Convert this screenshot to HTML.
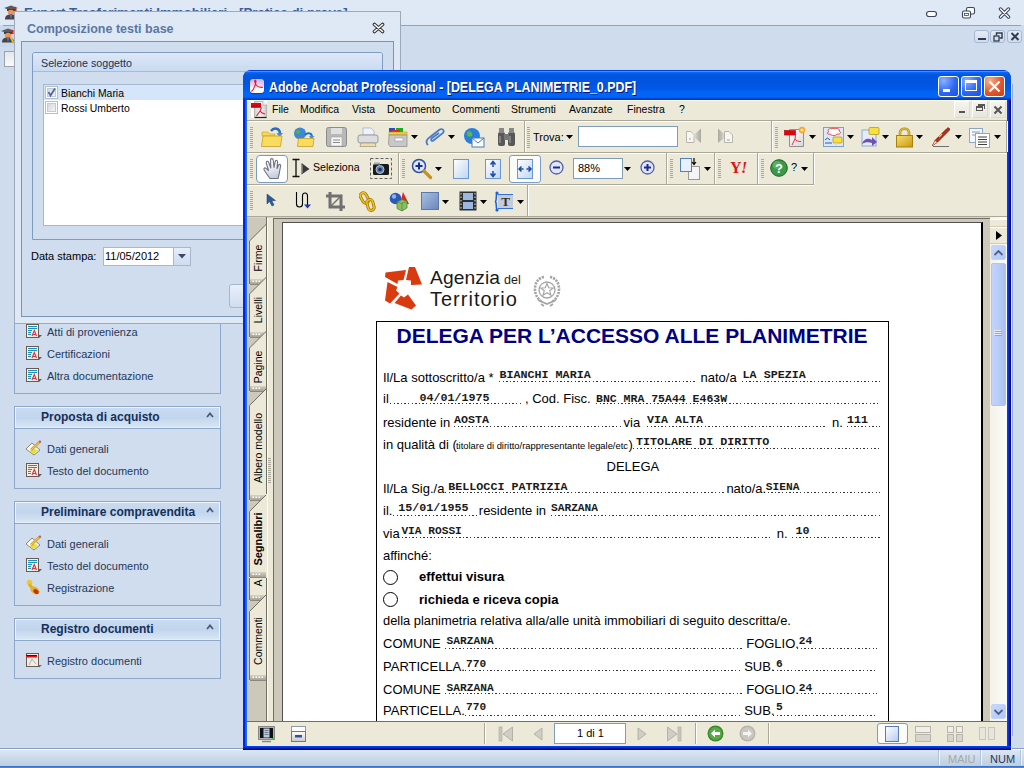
<!DOCTYPE html>
<html><head><meta charset="utf-8">
<style>
*{margin:0;padding:0;box-sizing:border-box}
html,body{width:1024px;height:768px;overflow:hidden;background:#cfdcee;font-family:"Liberation Sans",sans-serif;font-size:11px;color:#000}
.a{position:absolute}
#apptitle{left:0;top:0;width:1024px;height:26px;background:#dfe9f5;border-bottom:1px solid #8ea6c6}
#apptitle .t{position:absolute;left:24px;top:4px;font-weight:bold;font-size:14px;color:#3b5f9a;white-space:nowrap}
#statusbar{left:0;top:750px;width:1024px;height:18px;background:linear-gradient(#dde7f4,#c8d7eb)}
/* dialog */
#dlg{left:14px;top:11px;width:387px;height:313px;background:#dfe9f5;border:1px solid #9eaab8;border-right-color:#a3adb9}
#dlg .title{position:absolute;left:12px;top:9px;font-weight:bold;font-size:13px;color:#5b77a3;white-space:nowrap}
#frame{position:absolute;left:6px;top:29px;width:373px;height:276px;background:#d0ddee;border:1px solid #7894b8}
#grp{position:absolute;left:10px;top:10px;width:351px;height:188px;border:1px solid #7f9cc0;border-radius:2px}
#grp .hd{position:absolute;left:0;top:0;width:349px;height:19px;background:linear-gradient(#dde8f6,#c9daf0);border-bottom:1px solid #9fb6d4;color:#15305b;padding:3px 0 0 8px;font-size:11px}
#list{position:absolute;left:10px;top:31px;width:320px;height:142px;background:#fff;border:1px solid #a5b8d0}
.row{position:absolute;left:0;width:318px;height:15px;font-size:11px;color:#000;padding:1px 0 0 17px}
.cb{position:absolute;left:1px;top:1px;width:13px;height:13px;border:1px solid #a6b4c8;background:linear-gradient(135deg,#dfe4ea,#f6f7f9)}
/* left nav panels */
.panel{position:absolute;left:14px;width:207px;border:1px solid #98afcf;background:#d0ddee}
.phead{position:absolute;left:0;top:0;width:205px;height:23px;background:linear-gradient(#e6eef9,#c5d6ec);border-bottom:1px solid #98afcf;font-weight:bold;font-size:12px;color:#15305b;padding:4px 0 0 26px}
.phead .car{position:absolute;left:191px;top:7px;width:7px;height:5px}
.item{position:absolute;left:32px;font-size:11px;color:#1e395b;white-space:nowrap}
.ico{position:absolute;left:11px;width:16px;height:16px}
/* acrobat */

#acro{left:243px;top:70px;width:768px;height:680px;border-radius:8px 8px 0 0;background:linear-gradient(90deg,#2a44e6 0,#0000d0 1px,#0848e0 2px,#1a6ef8 3px,#1a6ef8 4px,#0a50e8 4px) ;overflow:hidden}
#atitle{position:absolute;left:0;top:0;width:768px;height:30px;border-radius:8px 8px 0 0;background:linear-gradient(#0041dd 0,#0041dd 1px,#3d95ff 1px,#3d95ff 2px,#0c6cf6 2px,#0a62ee 3px,#0256de 5px,#0054e0 12px,#005ae8 19px,#0064f4 22px,#0066f8 27px,#0052e6 28px,#003bc8 29px,#003bc8 30px)}
#atitletext_unused{position:absolute;left:26px;top:8px;font-weight:bold;font-size:13px;color:#fff;white-space:nowrap;text-shadow:1px 1px 0 #0a1a80}
.xpbtn{position:absolute;width:21px;height:21px;border:1px solid #fff;border-radius:3px;background:radial-gradient(circle at 30% 25%,#6e9cff,#2a62f0 60%,#1a4ad8)}
.xpbtn.close{background:radial-gradient(circle at 30% 25%,#f0a080,#e05030 60%,#c83818)}
#amain{position:absolute;left:4px;top:30px;width:760px;height:645px;background:#ece9d8}
#menubar{position:absolute;left:0;top:0;width:760px;height:20px;background:#ece9d8;border-top:1px solid #fffbf0;border-bottom:1px solid #fff}
#menubar span{position:absolute;top:3px;font-size:11px;color:#000;white-space:nowrap}
#tbarea{position:absolute;left:0;top:20px;width:760px;height:97px;background:#ece9d8}
#tabs{position:absolute;left:0;top:117px;width:20px;height:505px;background:#d4d0c8}
#docview{position:absolute;left:26px;top:117px;width:717px;height:505px;background:#d4d0c8;border-left:1px solid #716f64;border-top:1px solid #716f64;overflow:hidden}
#page{position:absolute;left:8px;top:4px;width:700px;height:600px;background:#fff;border:1px solid #000;border-right:2px solid #000}
#vscroll{position:absolute;left:743px;top:117px;width:17px;height:505px;background:linear-gradient(90deg,#f3f1e8,#fdfdf8)}
#astatus{position:absolute;left:0;top:622px;width:760px;height:23px;background:#ece9d8;border-top:1px solid #fff}

</style></head><body>
<div class="a" style="left:0px;top:0px;width:1024px;height:25px;background:#dfe9f5"></div>
<div class="a" style="left:3px;top:25px;width:1018px;height:1px;background:#8aa4c8"></div>
<div class="a" style="left:24px;top:5px;white-space:nowrap;font:bold 13.3px/16px 'Liberation Sans';color:#3a5e9c">Expert Trasferimenti Immobiliari - [Pratica di prova]</div>
<svg class="a" style="left:924px;top:10px" width="14" height="8" viewBox="0 0 14 8"><rect x="2.5" y="1.5" width="10" height="5" rx="2.5" fill="#fff" stroke="#3a4658" stroke-width="1.2"/></svg>
<svg class="a" style="left:961px;top:6px" width="15" height="13" viewBox="0 0 15 13"><rect x="5.5" y="1.5" width="8" height="6.5" rx="1.5" fill="#fff" stroke="#3a4658" stroke-width="1.1"/><rect x="1.5" y="5" width="8" height="7" rx="1.5" fill="#fff" stroke="#3a4658" stroke-width="1.1"/><rect x="3.5" y="7.5" width="4" height="2" fill="none" stroke="#3a4658" stroke-width=".8"/></svg>
<svg class="a" style="left:998px;top:7px" width="13" height="12" viewBox="0 0 13 12"><path d="M2.5 2 L10.5 10 M10.5 2 L2.5 10" stroke="#3a4658" stroke-width="3.4" stroke-linecap="round"/><path d="M2.5 2 L10.5 10 M10.5 2 L2.5 10" stroke="#fff" stroke-width="1.4" stroke-linecap="round"/></svg>
<div class="a" style="left:974px;top:30px;width:15px;height:13px;border:1px solid #a6b8d2;border-radius:3px;background:linear-gradient(#e4ecf6,#cfdcee)"></div>
<div class="a" style="left:990px;top:30px;width:15px;height:13px;border:1px solid #a6b8d2;border-radius:3px;background:linear-gradient(#e4ecf6,#cfdcee)"></div>
<div class="a" style="left:1007px;top:30px;width:15px;height:13px;border:1px solid #a6b8d2;border-radius:3px;background:linear-gradient(#e4ecf6,#cfdcee)"></div>
<div class="a" style="left:978px;top:38px;width:8px;height:2px;background:#333c4c"></div>
<svg class="a" style="left:993px;top:32px" width="10" height="10" viewBox="0 0 10 10"><rect x="1" y="4" width="5" height="5" fill="none" stroke="#333c4c" stroke-width="1.3"/><path d="M3.5 3.5 V1 H9 V6 H6.5" fill="none" stroke="#333c4c" stroke-width="1.5"/></svg>
<svg class="a" style="left:1010px;top:32px" width="10" height="9" viewBox="0 0 10 9"><path d="M1.5 1 L8.5 8 M8.5 1 L1.5 8" stroke="#333c4c" stroke-width="2"/></svg>
<svg class="a" style="left:3px;top:4px" width="16" height="16" viewBox="0 0 16 16"><path d="M1 4 L8 1.5 L15 4 L8 6.5Z" fill="#5a5a5a"/><path d="M4 5 H12 V7 H4Z" fill="#3a3a3a"/><path d="M12 3 L13 7" stroke="#e02010" stroke-width="1.6"/><ellipse cx="8" cy="8.5" rx="3.2" ry="2.8" fill="#f49050"/><path d="M2 15.5 C2 11 5 10.5 8 10.5 C11 10.5 14 11 14 15.5Z" fill="#454545"/><path d="M6.5 10.5 L8 15.5 L9.5 10.5" fill="#6a68b0"/></svg>
<div class="a" style="left:0px;top:26px;width:14px;height:21px;background:#c9d8ec"></div>
<svg class="a" style="left:0px;top:27px" width="16" height="16" viewBox="0 0 16 16"><path d="M1 4 L8 1.5 L15 4 L8 6.5Z" fill="#5a5a5a"/><path d="M4 5 H12 V7 H4Z" fill="#3a3a3a"/><path d="M12 3 L13 7" stroke="#e02010" stroke-width="1.6"/><ellipse cx="8" cy="8.5" rx="3.2" ry="2.8" fill="#f49050"/><path d="M2 15.5 C2 11 5 10.5 8 10.5 C11 10.5 14 11 14 15.5Z" fill="#454545"/><path d="M6.5 10.5 L8 15.5 L9.5 10.5" fill="#6a68b0"/></svg>
<svg class="a" style="left:10px;top:36px" width="5" height="8" viewBox="0 0 5 8"><path d="M1 0 L4 6 L3 8 L0 2Z" fill="#e8c030"/></svg>
<div class="a" style="left:4px;top:51px;width:11px;height:16px;background:linear-gradient(#e4e6ea,#fafafa);border:1px solid #9aa2ae"></div>
<div class="a" style="left:0px;top:748px;width:1024px;height:1px;background:#8aa0bc"></div>
<div class="a" style="left:0px;top:749px;width:1024px;height:1px;background:#f4f8fc"></div>
<div class="a" style="left:0px;top:750px;width:1024px;height:16px;background:linear-gradient(#dae6f4,#bccee2)"></div>
<div class="a" style="left:0px;top:766px;width:1024px;height:1px;background:#3a72c8"></div>
<div class="a" style="left:0px;top:767px;width:1024px;height:1px;background:#3a8ae6"></div>
<div class="a" style="left:938px;top:750px;width:1px;height:15px;background:#b4c2d6"></div>
<div class="a" style="left:939px;top:750px;width:1px;height:15px;background:#f2f6fb"></div>
<div class="a" style="left:980px;top:750px;width:1px;height:15px;background:#b4c2d6"></div>
<div class="a" style="left:981px;top:750px;width:1px;height:15px;background:#f2f6fb"></div>
<div class="a" style="left:1020px;top:750px;width:1px;height:15px;background:#b4c2d6"></div>
<div class="a" style="left:1021px;top:750px;width:1px;height:15px;background:#f2f6fb"></div>
<div class="a" style="left:948px;top:753px;white-space:nowrap;font:11px/12px 'Liberation Sans';color:#aaa89c">MAIU</div>
<div class="a" style="left:990px;top:753px;white-space:nowrap;font:11px/12px 'Liberation Sans';color:#1e395b">NUM</div>
<div class="a" style="left:14px;top:318px;width:207px;height:76px;border:1px solid #8ea8cc;background:#d0ddee"></div>
<svg class="a" style="left:26px;top:324px" width="16" height="15" viewBox="0 0 16 15"><path d="M13 11 L16 11 L13 14Z" fill="#5a5a5a"/><rect x="0.5" y="0.5" width="12" height="13" fill="#f6f0e2" stroke="#6a5a50"/><path d="M2 2.5 H11 M2 4.5 H11 M2 6.5 H6 M2 8.5 H5 M2 10.5 H5" stroke="#1a90c0" stroke-width="1"/><path d="M6 12 L8.3 6.5 L10.5 12 M7 10.5 H10" fill="none" stroke="#e03048" stroke-width="1.1"/></svg>
<div class="a" style="left:47px;top:326px;white-space:nowrap;font:11px/13px 'Liberation Sans';color:#1e395b">Atti di provenienza</div>
<svg class="a" style="left:26px;top:346px" width="16" height="15" viewBox="0 0 16 15"><path d="M13 11 L16 11 L13 14Z" fill="#5a5a5a"/><rect x="0.5" y="0.5" width="12" height="13" fill="#f6f0e2" stroke="#6a5a50"/><path d="M2 2.5 H11 M2 4.5 H11 M2 6.5 H6 M2 8.5 H5 M2 10.5 H5" stroke="#1a90c0" stroke-width="1"/><path d="M6 12 L8.3 6.5 L10.5 12 M7 10.5 H10" fill="none" stroke="#e03048" stroke-width="1.1"/></svg>
<div class="a" style="left:47px;top:348px;white-space:nowrap;font:11px/13px 'Liberation Sans';color:#1e395b">Certificazioni</div>
<svg class="a" style="left:26px;top:368px" width="16" height="15" viewBox="0 0 16 15"><path d="M13 11 L16 11 L13 14Z" fill="#5a5a5a"/><rect x="0.5" y="0.5" width="12" height="13" fill="#f6f0e2" stroke="#6a5a50"/><path d="M2 2.5 H11 M2 4.5 H11 M2 6.5 H6 M2 8.5 H5 M2 10.5 H5" stroke="#1a90c0" stroke-width="1"/><path d="M6 12 L8.3 6.5 L10.5 12 M7 10.5 H10" fill="none" stroke="#e03048" stroke-width="1.1"/></svg>
<div class="a" style="left:47px;top:370px;white-space:nowrap;font:11px/13px 'Liberation Sans';color:#1e395b">Altra documentazione</div>
<div class="a" style="left:14px;top:406px;width:207px;height:83px;border:1px solid #8ea8cc;background:#d0ddee"></div>
<div class="a" style="left:15px;top:407px;width:205px;height:21px;background:linear-gradient(#c9dbf0,#c1d5ec 50%,#d8e6f5);border:1px solid #f0f5fb;border-bottom-color:#e4edf8"></div>
<div class="a" style="left:15px;top:428px;width:205px;height:1px;background:#8ea8cc"></div>
<div class="a" style="left:41px;top:410px;white-space:nowrap;font:bold 12px/14px 'Liberation Sans';color:#15305b">Proposta di acquisto</div>
<svg class="a" style="left:206px;top:412px" width="8" height="6" viewBox="0 0 8 6"><path d="M1 5 L4 1.5 L7 5" fill="none" stroke="#4a5a7a" stroke-width="1.8"/></svg>
<svg class="a" style="left:25px;top:440px" width="17" height="16" viewBox="0 0 17 16"><path d="M1 9 L7 3 L15 10 L9 15Z" fill="#f8f8f0" stroke="#606040" stroke-width=".7"/><path d="M4 11 L9 14 L13 10 L9 9Z" fill="#e8e030"/><path d="M6 10 L15 1.5" stroke="#d0a030" stroke-width="2.5"/><path d="M6 10 L15 1.5" stroke="#f0d070" stroke-width="1"/><circle cx="15" cy="1.8" r="1.2" fill="#c06080"/></svg>
<div class="a" style="left:47px;top:443px;white-space:nowrap;font:11px/13px 'Liberation Sans';color:#1e395b">Dati generali</div>
<svg class="a" style="left:26px;top:463px" width="16" height="15" viewBox="0 0 16 15"><path d="M13 11 L16 11 L13 14Z" fill="#5a5a5a"/><rect x="0.5" y="0.5" width="12" height="13" fill="#f6f0e2" stroke="#6a5a50"/><path d="M2 2.5 H11 M2 4.5 H11 M2 6.5 H6 M2 8.5 H5 M2 10.5 H5" stroke="#1a90c0" stroke-width="1"/><path d="M6 12 L8.3 6.5 L10.5 12 M7 10.5 H10" fill="none" stroke="#e03048" stroke-width="1.1"/></svg>
<div class="a" style="left:47px;top:465px;white-space:nowrap;font:11px/13px 'Liberation Sans';color:#1e395b">Testo del documento</div>
<div class="a" style="left:14px;top:501px;width:207px;height:105px;border:1px solid #8ea8cc;background:#d0ddee"></div>
<div class="a" style="left:15px;top:502px;width:205px;height:21px;background:linear-gradient(#c9dbf0,#c1d5ec 50%,#d8e6f5);border:1px solid #f0f5fb;border-bottom-color:#e4edf8"></div>
<div class="a" style="left:15px;top:523px;width:205px;height:1px;background:#8ea8cc"></div>
<div class="a" style="left:41px;top:505px;white-space:nowrap;font:bold 12px/14px 'Liberation Sans';color:#15305b">Preliminare compravendita</div>
<svg class="a" style="left:206px;top:507px" width="8" height="6" viewBox="0 0 8 6"><path d="M1 5 L4 1.5 L7 5" fill="none" stroke="#4a5a7a" stroke-width="1.8"/></svg>
<svg class="a" style="left:25px;top:535px" width="17" height="16" viewBox="0 0 17 16"><path d="M1 9 L7 3 L15 10 L9 15Z" fill="#f8f8f0" stroke="#606040" stroke-width=".7"/><path d="M4 11 L9 14 L13 10 L9 9Z" fill="#e8e030"/><path d="M6 10 L15 1.5" stroke="#d0a030" stroke-width="2.5"/><path d="M6 10 L15 1.5" stroke="#f0d070" stroke-width="1"/><circle cx="15" cy="1.8" r="1.2" fill="#c06080"/></svg>
<div class="a" style="left:47px;top:538px;white-space:nowrap;font:11px/13px 'Liberation Sans';color:#1e395b">Dati generali</div>
<svg class="a" style="left:26px;top:558px" width="16" height="15" viewBox="0 0 16 15"><path d="M13 11 L16 11 L13 14Z" fill="#5a5a5a"/><rect x="0.5" y="0.5" width="12" height="13" fill="#f6f0e2" stroke="#6a5a50"/><path d="M2 2.5 H11 M2 4.5 H11 M2 6.5 H6 M2 8.5 H5 M2 10.5 H5" stroke="#1a90c0" stroke-width="1"/><path d="M6 12 L8.3 6.5 L10.5 12 M7 10.5 H10" fill="none" stroke="#e03048" stroke-width="1.1"/></svg>
<div class="a" style="left:47px;top:560px;white-space:nowrap;font:11px/13px 'Liberation Sans';color:#1e395b">Testo del documento</div>
<svg class="a" style="left:25px;top:579px" width="16" height="16" viewBox="0 0 16 16"><circle cx="4.5" cy="3.5" r="2.8" fill="#f0c830"/><path d="M4 5 L8 10" stroke="#e0b020" stroke-width="3"/><ellipse cx="10" cy="11.5" rx="5" ry="3.5" transform="rotate(35 10 11.5)" fill="#e8b020"/><ellipse cx="11" cy="12.5" rx="3" ry="2" transform="rotate(35 11 12.5)" fill="#c03020"/></svg>
<div class="a" style="left:47px;top:582px;white-space:nowrap;font:11px/13px 'Liberation Sans';color:#1e395b">Registrazione</div>
<div class="a" style="left:14px;top:618px;width:207px;height:61px;border:1px solid #8ea8cc;background:#d0ddee"></div>
<div class="a" style="left:15px;top:619px;width:205px;height:21px;background:linear-gradient(#c9dbf0,#c1d5ec 50%,#d8e6f5);border:1px solid #f0f5fb;border-bottom-color:#e4edf8"></div>
<div class="a" style="left:15px;top:640px;width:205px;height:1px;background:#8ea8cc"></div>
<div class="a" style="left:41px;top:622px;white-space:nowrap;font:bold 12px/14px 'Liberation Sans';color:#15305b">Registro documenti</div>
<svg class="a" style="left:206px;top:624px" width="8" height="6" viewBox="0 0 8 6"><path d="M1 5 L4 1.5 L7 5" fill="none" stroke="#4a5a7a" stroke-width="1.8"/></svg>
<svg class="a" style="left:26px;top:653px" width="16" height="15" viewBox="0 0 16 15"><path d="M13 12 L16 12 L13 14.5Z" fill="#6a6a6a"/><rect x="0.5" y="0.5" width="12" height="13" fill="#f0ece4" stroke="#6a5a50"/><rect x="0" y="2" width="11" height="2.5" fill="#e01010"/><rect x="0" y="2" width="11" height=".8" fill="#201010"/><path d="M3 12 L6 6 L10 11" fill="none" stroke="#b8b0a8" stroke-width="1"/></svg>
<div class="a" style="left:47px;top:655px;white-space:nowrap;font:11px/13px 'Liberation Sans';color:#1e395b">Registro documenti</div>
<div class="a" style="left:14px;top:11px;width:387px;height:313px;background:#dfe9f5;border:1px solid #9eaab8"></div>
<div class="a" style="left:27px;top:21.5px;white-space:nowrap;font:bold 12.5px/15px 'Liberation Sans';color:#5b77a3">Composizione testi base</div>
<svg class="a" style="left:372px;top:22px" width="13" height="12" viewBox="0 0 13 12"><path d="M2.5 2.5 L10.5 9.5 M10.5 2.5 L2.5 9.5" stroke="#303030" stroke-width="3.6" stroke-linecap="round"/><path d="M2.5 2.5 L10.5 9.5 M10.5 2.5 L2.5 9.5" stroke="#fff" stroke-width="1.6" stroke-linecap="round"/></svg>
<div class="a" style="left:21px;top:41px;width:373px;height:276px;background:#d0ddee;border:1px solid #7894b8"></div>
<div class="a" style="left:32px;top:52px;width:351px;height:188px;border:1px solid #7f9cc0;border-radius:3px 3px 0 0"></div>
<div class="a" style="left:33px;top:53px;width:349px;height:19px;background:linear-gradient(#dde8f7,#c9daf0);border-bottom:1px solid #a8bcd8;border-radius:2px 2px 0 0"></div>
<div class="a" style="left:41px;top:57px;white-space:nowrap;font:10.7px/13px 'Liberation Sans';color:#15305b">Selezione soggetto</div>
<div class="a" style="left:43px;top:84px;width:320px;height:142px;background:#fff;border:1px solid #a5b8d0"></div>
<div class="a" style="left:44px;top:85px;width:318px;height:15px;background:#d5e5fa"></div>
<div class="a" style="left:45px;top:86px;width:13px;height:13px;border:1px solid #aec0d8;background:#fff"><div style='position:absolute;left:1px;top:1px;width:9px;height:9px;border:1px solid #c4cad2;background:linear-gradient(135deg,#d4d8de,#f2f4f6)'></div></div>
<svg class="a" style="left:46px;top:87px" width="11" height="11" viewBox="0 0 11 11"><path d="M2.5 5 L4.5 8.5 L9 1.5" fill="none" stroke="#4a68a8" stroke-width="1.7"/></svg>
<div class="a" style="left:45px;top:101px;width:13px;height:13px;border:1px solid #aec0d8;background:#fff"><div style='position:absolute;left:1px;top:1px;width:9px;height:9px;border:1px solid #c4cad2;background:linear-gradient(135deg,#d4d8de,#f2f4f6)'></div></div>
<div class="a" style="left:61px;top:87px;white-space:nowrap;font:10.4px/13px 'Liberation Sans';color:#000">Bianchi Maria</div>
<div class="a" style="left:61px;top:102px;white-space:nowrap;font:10.4px/13px 'Liberation Sans';color:#000">Rossi Umberto</div>
<div class="a" style="left:31px;top:250px;white-space:nowrap;font:11px/13px 'Liberation Sans';color:#000">Data stampa:</div>
<div class="a" style="left:103px;top:247px;width:88px;height:19px;background:#fff;border:1px solid #a5b8d0"></div>
<div class="a" style="left:105px;top:250px;white-space:nowrap;font:11px/13px 'Liberation Sans';color:#000">11/05/2012</div>
<div class="a" style="left:173px;top:247px;width:18px;height:19px;background:linear-gradient(#e6eef9,#cddcef);border:1px solid #a5b8d0"></div>
<svg class="a" style="left:178px;top:254px" width="8" height="5" viewBox="0 0 8 5"><path d="M0 0 H8 L4 4.5Z" fill="#3a4a6a"/></svg>
<div class="a" style="left:229px;top:284px;width:40px;height:24px;background:linear-gradient(#e8f0fa,#d0ddef);border:1px solid #a5b8d0;border-radius:3px"></div><div id="acro" class="a"><div id="atitle"></div><div id="amain"></div></div>
<div class="a" style="left:247px;top:218px;width:20px;height:503px;background:#cdc9ba"></div>
<div class="a" style="left:267px;top:218px;width:6px;height:503px;background:#ece9d8;border-left:1px solid #fbfaf4"></div>
<div class="a" style="left:273px;top:218px;width:717px;height:503px;background:#cdc9ba;border-left:1px solid #716f64;border-top:1px solid #716f64;overflow:hidden"><div style="position:absolute;left:8px;top:3px;width:701px;height:600px;background:#fff;border:1px solid #505050;border-right:2px solid #000"></div></div>
<div class="a" style="left:247px;top:217px;width:760px;height:1px;background:#d8d4c4"></div>
<div class="a" style="left:990px;top:217px;width:17px;height:505px;background:linear-gradient(90deg,#f3f1e8,#fdfdf8)"></div>
<div class="a" style="left:1007px;top:100px;width:1px;height:650px;background:#0040f0"></div>
<div class="a" style="left:1008px;top:100px;width:1px;height:650px;background:#0030d8"></div>
<div class="a" style="left:1009px;top:100px;width:1px;height:650px;background:#0018b0"></div>
<div class="a" style="left:1010px;top:100px;width:1px;height:650px;background:#000890"></div>
<div class="a" style="left:243px;top:746px;width:768px;height:1px;background:#0040f0"></div>
<div class="a" style="left:243px;top:747px;width:768px;height:1px;background:#0030d0"></div>
<div class="a" style="left:243px;top:748px;width:768px;height:1px;background:#0018a0"></div>
<div class="a" style="left:243px;top:749px;width:768px;height:1px;background:#000880"></div>
<div class="a" style="left:1011px;top:84px;width:1px;height:665px;background:#dce6f2"></div>
<div class="a" style="left:1012px;top:84px;width:1px;height:652px;background:#98acc8"></div>
<div class="a" style="left:250px;top:79px;width:14px;height:14px;background:linear-gradient(#d0b0e8,#ecdcf4 50%,#fff 70%,#f8f4f0);border-radius:3px;box-shadow:0 1px 1px #1a3a90"></div>
<svg class="a" style="left:250px;top:79px" width="14" height="14" viewBox="0 0 14 14"><path d="M1.5 12.5 C3.5 10.5 5 7 5.8 3.5 C6.1 1.8 5.5 0.8 5 1.2 C4.4 1.8 5 4.5 6.5 6.5 C8 8.3 10.5 8.5 13 8.3" fill="none" stroke="#f01020" stroke-width="1.1"/></svg>
<div class="a" style="left:269px;top:79px;white-space:nowrap;font-weight:bold;font-size:14px;line-height:16px;color:#fff;transform:scaleX(0.888);transform-origin:0 0;text-shadow:1px 1px 0 #0a1878">Adobe Acrobat Professional - [DELEGA PLANIMETRIE_0.PDF]</div>
<div class="a" style="left:938px;top:76px;width:21px;height:21px;border:1px solid #fff;border-radius:3px;background:radial-gradient(circle at 25% 20%,#8ab0ff,#2e68f4 55%,#1c4ee0)"></div>
<div class="a" style="left:961px;top:76px;width:21px;height:21px;border:1px solid #fff;border-radius:3px;background:radial-gradient(circle at 25% 20%,#8ab0ff,#2e68f4 55%,#1c4ee0)"></div>
<div class="a" style="left:984px;top:76px;width:21px;height:21px;border:1px solid #fff;border-radius:3px;background:radial-gradient(circle at 25% 20%,#f6b090,#e2582e 55%,#c84018)"></div>
<div class="a" style="left:943px;top:89px;width:7px;height:3px;background:#fff"></div>
<div class="a" style="left:965px;top:80px;width:12px;height:11px;border:1px solid #fff;border-top-width:3px"></div>
<svg class="a" style="left:984px;top:76px" width="21" height="21" viewBox="0 0 21 21"><path d="M5.5 5.5 L15.5 15.5 M15.5 5.5 L5.5 15.5" stroke="#fff" stroke-width="2.2"/></svg>
<div class="a" style="left:247px;top:100px;width:760px;height:21px;background:#ece9d8;border-top:1px solid #fffaf0"></div>
<svg class="a" style="left:250px;top:101px" width="18" height="18" viewBox="0 0 18 18"><rect x="1" y="0" width="16" height="17" fill="#fff"/><defs><linearGradient id="gmi" x1="0" y1="0" x2="1" y2="0"><stop offset="0" stop-color="#d0d0d0"/><stop offset=".5" stop-color="#f4f4f4"/><stop offset="1" stop-color="#c8c8c8"/></linearGradient></defs><path d="M4.5 0.5 H13 L16.5 4 V16.5 H4.5Z" fill="url(#gmi)" stroke="#a8a8a8" stroke-width=".8"/><path d="M4.5 16.5 H16.5" stroke="#202020" stroke-width="1.2"/><path d="M13 0.5 V4 H16.5" fill="#fff" stroke="#999" stroke-width=".6"/><rect x="1" y="2" width="10" height="4.5" fill="#e80010"/><rect x="1" y="5.5" width="10" height="1" fill="#900008"/><path d="M6.5 15 L10 10 L11.5 6.5 M10 10 C11 12 13 12.5 15 13" fill="none" stroke="#e02030" stroke-width="1.1"/></svg>
<div class="a" style="left:272px;top:103px;white-space:nowrap;font-size:10.5px;color:#000">File</div>
<div class="a" style="left:300px;top:103px;white-space:nowrap;font-size:10.5px;color:#000">Modifica</div>
<div class="a" style="left:352px;top:103px;white-space:nowrap;font-size:10.5px;color:#000">Vista</div>
<div class="a" style="left:387px;top:103px;white-space:nowrap;font-size:10.5px;color:#000">Documento</div>
<div class="a" style="left:452px;top:103px;white-space:nowrap;font-size:10.5px;color:#000">Commenti</div>
<div class="a" style="left:511px;top:103px;white-space:nowrap;font-size:10.5px;color:#000">Strumenti</div>
<div class="a" style="left:569px;top:103px;white-space:nowrap;font-size:10.5px;color:#000">Avanzate</div>
<div class="a" style="left:627px;top:103px;white-space:nowrap;font-size:10.5px;color:#000">Finestra</div>
<div class="a" style="left:679px;top:103px;white-space:nowrap;font-size:10.5px;color:#000">?</div>
<div class="a" style="left:954px;top:101px;width:16px;height:17px;background:linear-gradient(#f4f3ee,#e8e6dc);border:1px solid #fff;border-right-color:#dedbd0;border-bottom-color:#dedbd0"></div>
<div class="a" style="left:972px;top:101px;width:16px;height:17px;background:linear-gradient(#f4f3ee,#e8e6dc);border:1px solid #fff;border-right-color:#dedbd0;border-bottom-color:#dedbd0"></div>
<div class="a" style="left:990px;top:101px;width:16px;height:17px;background:linear-gradient(#f4f3ee,#e8e6dc);border:1px solid #fff;border-right-color:#dedbd0;border-bottom-color:#dedbd0"></div>
<div class="a" style="left:959px;top:111px;width:6px;height:2px;background:#555"></div>
<div class="a" style="left:976px;top:106px;width:7px;height:5px;border:1px solid #555;border-top-width:2px"></div>
<div class="a" style="left:978px;top:104px;width:7px;height:5px;border:1px solid #555;border-top-width:2px;border-left:none;border-bottom:none"></div>
<svg class="a" style="left:990px;top:101px" width="16" height="17" viewBox="0 0 16 17"><path d="M4.5 5.5 L11.5 12.5 M11.5 5.5 L4.5 12.5" stroke="#555" stroke-width="2"/></svg>
<div class="a" style="left:247px;top:120px;width:760px;height:1px;background:#aca899"></div>
<div class="a" style="left:247px;top:121px;width:760px;height:1px;background:#fff"></div>
<div class="a" style="left:247px;top:152px;width:760px;height:1px;background:#aca899"></div>
<div class="a" style="left:247px;top:153px;width:760px;height:1px;background:#fff"></div>
<div class="a" style="left:247px;top:184px;width:567px;height:1px;background:#aca899"></div>
<div class="a" style="left:247px;top:185px;width:567px;height:1px;background:#fff"></div>
<div class="a" style="left:247px;top:216px;width:760px;height:1px;background:#aca899"></div>
<svg class="a" style="left:250px;top:127px" width="3" height="21" viewBox="0 0 3 21"><rect x="0" y="0" width="3" height="1" fill="#aaa89a"/><rect x="0" y="2" width="3" height="1" fill="#aaa89a"/><rect x="0" y="4" width="3" height="1" fill="#aaa89a"/><rect x="0" y="6" width="3" height="1" fill="#aaa89a"/><rect x="0" y="8" width="3" height="1" fill="#aaa89a"/><rect x="0" y="10" width="3" height="1" fill="#aaa89a"/><rect x="0" y="12" width="3" height="1" fill="#aaa89a"/><rect x="0" y="14" width="3" height="1" fill="#aaa89a"/><rect x="0" y="16" width="3" height="1" fill="#aaa89a"/><rect x="0" y="18" width="3" height="1" fill="#aaa89a"/><rect x="0" y="20" width="3" height="1" fill="#aaa89a"/></svg>
<div class="a" style="left:524px;top:121px;width:1px;height:31px;background:#aca899"></div>
<div class="a" style="left:525px;top:121px;width:1px;height:31px;background:#fff"></div>
<svg class="a" style="left:527px;top:127px" width="3" height="21" viewBox="0 0 3 21"><rect x="0" y="0" width="3" height="1" fill="#aaa89a"/><rect x="0" y="2" width="3" height="1" fill="#aaa89a"/><rect x="0" y="4" width="3" height="1" fill="#aaa89a"/><rect x="0" y="6" width="3" height="1" fill="#aaa89a"/><rect x="0" y="8" width="3" height="1" fill="#aaa89a"/><rect x="0" y="10" width="3" height="1" fill="#aaa89a"/><rect x="0" y="12" width="3" height="1" fill="#aaa89a"/><rect x="0" y="14" width="3" height="1" fill="#aaa89a"/><rect x="0" y="16" width="3" height="1" fill="#aaa89a"/><rect x="0" y="18" width="3" height="1" fill="#aaa89a"/><rect x="0" y="20" width="3" height="1" fill="#aaa89a"/></svg>
<div class="a" style="left:771px;top:121px;width:1px;height:31px;background:#aca899"></div>
<div class="a" style="left:772px;top:121px;width:1px;height:31px;background:#fff"></div>
<svg class="a" style="left:775px;top:127px" width="3" height="21" viewBox="0 0 3 21"><rect x="0" y="0" width="3" height="1" fill="#aaa89a"/><rect x="0" y="2" width="3" height="1" fill="#aaa89a"/><rect x="0" y="4" width="3" height="1" fill="#aaa89a"/><rect x="0" y="6" width="3" height="1" fill="#aaa89a"/><rect x="0" y="8" width="3" height="1" fill="#aaa89a"/><rect x="0" y="10" width="3" height="1" fill="#aaa89a"/><rect x="0" y="12" width="3" height="1" fill="#aaa89a"/><rect x="0" y="14" width="3" height="1" fill="#aaa89a"/><rect x="0" y="16" width="3" height="1" fill="#aaa89a"/><rect x="0" y="18" width="3" height="1" fill="#aaa89a"/><rect x="0" y="20" width="3" height="1" fill="#aaa89a"/></svg>
<div class="a" style="left:1006px;top:121px;width:1px;height:31px;background:#aca899"></div>
<div class="a" style="left:1007px;top:121px;width:1px;height:31px;background:#fff"></div>
<svg class="a" style="left:250px;top:159px" width="3" height="20" viewBox="0 0 3 20"><rect x="0" y="0" width="3" height="1" fill="#aaa89a"/><rect x="0" y="2" width="3" height="1" fill="#aaa89a"/><rect x="0" y="4" width="3" height="1" fill="#aaa89a"/><rect x="0" y="6" width="3" height="1" fill="#aaa89a"/><rect x="0" y="8" width="3" height="1" fill="#aaa89a"/><rect x="0" y="10" width="3" height="1" fill="#aaa89a"/><rect x="0" y="12" width="3" height="1" fill="#aaa89a"/><rect x="0" y="14" width="3" height="1" fill="#aaa89a"/><rect x="0" y="16" width="3" height="1" fill="#aaa89a"/><rect x="0" y="18" width="3" height="1" fill="#aaa89a"/></svg>
<div class="a" style="left:398px;top:153px;width:1px;height:31px;background:#aca899"></div>
<div class="a" style="left:399px;top:153px;width:1px;height:31px;background:#fff"></div>
<svg class="a" style="left:402px;top:159px" width="3" height="20" viewBox="0 0 3 20"><rect x="0" y="0" width="3" height="1" fill="#aaa89a"/><rect x="0" y="2" width="3" height="1" fill="#aaa89a"/><rect x="0" y="4" width="3" height="1" fill="#aaa89a"/><rect x="0" y="6" width="3" height="1" fill="#aaa89a"/><rect x="0" y="8" width="3" height="1" fill="#aaa89a"/><rect x="0" y="10" width="3" height="1" fill="#aaa89a"/><rect x="0" y="12" width="3" height="1" fill="#aaa89a"/><rect x="0" y="14" width="3" height="1" fill="#aaa89a"/><rect x="0" y="16" width="3" height="1" fill="#aaa89a"/><rect x="0" y="18" width="3" height="1" fill="#aaa89a"/></svg>
<div class="a" style="left:666px;top:153px;width:1px;height:31px;background:#aca899"></div>
<div class="a" style="left:667px;top:153px;width:1px;height:31px;background:#fff"></div>
<svg class="a" style="left:670px;top:159px" width="3" height="20" viewBox="0 0 3 20"><rect x="0" y="0" width="3" height="1" fill="#aaa89a"/><rect x="0" y="2" width="3" height="1" fill="#aaa89a"/><rect x="0" y="4" width="3" height="1" fill="#aaa89a"/><rect x="0" y="6" width="3" height="1" fill="#aaa89a"/><rect x="0" y="8" width="3" height="1" fill="#aaa89a"/><rect x="0" y="10" width="3" height="1" fill="#aaa89a"/><rect x="0" y="12" width="3" height="1" fill="#aaa89a"/><rect x="0" y="14" width="3" height="1" fill="#aaa89a"/><rect x="0" y="16" width="3" height="1" fill="#aaa89a"/><rect x="0" y="18" width="3" height="1" fill="#aaa89a"/></svg>
<div class="a" style="left:714px;top:153px;width:1px;height:31px;background:#aca899"></div>
<div class="a" style="left:715px;top:153px;width:1px;height:31px;background:#fff"></div>
<svg class="a" style="left:718px;top:159px" width="3" height="20" viewBox="0 0 3 20"><rect x="0" y="0" width="3" height="1" fill="#aaa89a"/><rect x="0" y="2" width="3" height="1" fill="#aaa89a"/><rect x="0" y="4" width="3" height="1" fill="#aaa89a"/><rect x="0" y="6" width="3" height="1" fill="#aaa89a"/><rect x="0" y="8" width="3" height="1" fill="#aaa89a"/><rect x="0" y="10" width="3" height="1" fill="#aaa89a"/><rect x="0" y="12" width="3" height="1" fill="#aaa89a"/><rect x="0" y="14" width="3" height="1" fill="#aaa89a"/><rect x="0" y="16" width="3" height="1" fill="#aaa89a"/><rect x="0" y="18" width="3" height="1" fill="#aaa89a"/></svg>
<div class="a" style="left:757px;top:153px;width:1px;height:31px;background:#aca899"></div>
<div class="a" style="left:758px;top:153px;width:1px;height:31px;background:#fff"></div>
<svg class="a" style="left:761px;top:159px" width="3" height="20" viewBox="0 0 3 20"><rect x="0" y="0" width="3" height="1" fill="#aaa89a"/><rect x="0" y="2" width="3" height="1" fill="#aaa89a"/><rect x="0" y="4" width="3" height="1" fill="#aaa89a"/><rect x="0" y="6" width="3" height="1" fill="#aaa89a"/><rect x="0" y="8" width="3" height="1" fill="#aaa89a"/><rect x="0" y="10" width="3" height="1" fill="#aaa89a"/><rect x="0" y="12" width="3" height="1" fill="#aaa89a"/><rect x="0" y="14" width="3" height="1" fill="#aaa89a"/><rect x="0" y="16" width="3" height="1" fill="#aaa89a"/><rect x="0" y="18" width="3" height="1" fill="#aaa89a"/></svg>
<div class="a" style="left:813px;top:153px;width:1px;height:31px;background:#aca899"></div>
<div class="a" style="left:814px;top:153px;width:1px;height:31px;background:#fff"></div>
<svg class="a" style="left:250px;top:191px" width="3" height="20" viewBox="0 0 3 20"><rect x="0" y="0" width="3" height="1" fill="#aaa89a"/><rect x="0" y="2" width="3" height="1" fill="#aaa89a"/><rect x="0" y="4" width="3" height="1" fill="#aaa89a"/><rect x="0" y="6" width="3" height="1" fill="#aaa89a"/><rect x="0" y="8" width="3" height="1" fill="#aaa89a"/><rect x="0" y="10" width="3" height="1" fill="#aaa89a"/><rect x="0" y="12" width="3" height="1" fill="#aaa89a"/><rect x="0" y="14" width="3" height="1" fill="#aaa89a"/><rect x="0" y="16" width="3" height="1" fill="#aaa89a"/><rect x="0" y="18" width="3" height="1" fill="#aaa89a"/></svg>
<div class="a" style="left:527px;top:185px;width:1px;height:31px;background:#aca899"></div>
<div class="a" style="left:528px;top:185px;width:1px;height:31px;background:#fff"></div>
<svg class="a" style="left:261px;top:127px" width="22" height="20" viewBox="0 0 22 20"><path d="M10 4 C13 0 19 1 19 7" fill="none" stroke="#2a6cc0" stroke-width="2.5"/><path d="M15.5 6 L22 6 L18.5 10.5Z" fill="#4a8ce0"/><path d="M1 5 L7 5 L8.5 7 L14 7 L14 9 L1 9Z" fill="#f4d860" stroke="#c8a020" stroke-width=".6"/><path d="M0.5 19.5 L2 9 L21 9 L19.5 19.5Z" fill="#f8dc60" stroke="#c8a020" stroke-width=".8"/></svg>
<svg class="a" style="left:293px;top:127px" width="22" height="20" viewBox="0 0 22 20"><circle cx="7" cy="6.5" r="6" fill="#3a88d8"/><path d="M3 4 C5 2 8 3 7 6 C5 8 3 7 3 4Z" fill="#5ab040"/><path d="M12 8 C15 5 19 6 19 10" fill="none" stroke="#2a6cc0" stroke-width="2"/><path d="M16 9 L21.5 9 L18.5 12.5Z" fill="#4a8ce0"/><path d="M4.5 19.5 L5.5 11.5 L21 11.5 L20 19.5Z" fill="#f8dc60" stroke="#c8a020" stroke-width=".8"/></svg>
<svg class="a" style="left:326px;top:127px" width="21" height="20" viewBox="0 0 21 20"><rect x="0.5" y="0.5" width="20" height="19" rx="2" fill="#b8b8b8" stroke="#8c8c8c"/><rect x="5" y="1" width="11" height="6" fill="#e0e0e0"/><rect x="5" y="10" width="11" height="9" fill="#f6f6f6" stroke="#999" stroke-width=".5"/><path d="M7 13 H14 M7 15.5 H14" stroke="#888"/></svg>
<svg class="a" style="left:357px;top:127px" width="22" height="20" viewBox="0 0 22 20"><path d="M6 1 L14 1 L17 4 L17 8 L6 8Z" fill="#eef4ff" stroke="#9ab" stroke-width=".7"/><rect x="1" y="8" width="20" height="8" rx="2" fill="#ddd" stroke="#999"/><path d="M4 16 L18 16 L19 19.5 L3 19.5Z" fill="#f0e0a0" stroke="#888" stroke-width=".6"/></svg>
<svg class="a" style="left:388px;top:127px" width="20" height="20" viewBox="0 0 20 20"><rect x="1" y="1" width="6" height="4" fill="#2050d0"/><rect x="8" y="1" width="7" height="4" fill="#10b020"/><rect x="4" y="3" width="8" height="3" fill="#e02020"/><rect x="1" y="5" width="18" height="3" fill="#f0d040" stroke="#b09020" stroke-width=".5"/><path d="M1 8 L19 8 L19 19.5 L2 19.5 L0.5 17Z" fill="#c8c8c8" stroke="#888" stroke-width=".7"/><rect x="7" y="11" width="8" height="3" fill="#fff" stroke="#888" stroke-width=".5"/></svg>
<svg class="a" style="left:411px;top:135px" width="7" height="4" viewBox="0 0 7 4"><path d="M0 0 L7 0 L3.5 4Z" fill="#000"/></svg>
<svg class="a" style="left:425px;top:127px" width="21" height="20" viewBox="0 0 21 20"><path d="M3 18 C0 15 2 12 5 10 L14 3 C17 1 20 3 18 6 L9 13 C7 15 5 13 7 11 L14 6" fill="none" stroke="#4a7cc8" stroke-width="1.8"/></svg>
<svg class="a" style="left:448px;top:135px" width="7" height="4" viewBox="0 0 7 4"><path d="M0 0 L7 0 L3.5 4Z" fill="#000"/></svg>
<svg class="a" style="left:463px;top:127px" width="22" height="21" viewBox="0 0 22 21"><circle cx="9" cy="9" r="8" fill="#2a80d8"/><path d="M4 5 C7 3 10 5 9 9 C6 11 3 9 4 5Z" fill="#60b840"/><rect x="9" y="11" width="12" height="9" fill="#fff" stroke="#4a78c0"/><path d="M9 11 L15 16 L21 11" fill="none" stroke="#4a78c0"/></svg>
<svg class="a" style="left:497px;top:127px" width="19" height="20" viewBox="0 0 19 20"><rect x="1" y="5" width="7" height="14" rx="2" fill="#585858"/><rect x="11" y="5" width="7" height="14" rx="2" fill="#585858"/><rect x="2" y="1" width="5" height="5" fill="#888"/><rect x="12" y="1" width="5" height="5" fill="#888"/><rect x="7" y="7" width="5" height="6" fill="#777"/><path d="M3 9 V16 M13 9 V16" stroke="#aaa"/></svg>
<div class="a" style="left:533px;top:131px;white-space:nowrap;font-size:11px">Trova:</div>
<svg class="a" style="left:566px;top:135px" width="7" height="4" viewBox="0 0 7 4"><path d="M0 0 L7 0 L3.5 4Z" fill="#000"/></svg>
<div class="a" style="left:578px;top:126px;width:100px;height:21px;background:#fff;border:1px solid #7f9db9"></div>
<svg class="a" style="left:686px;top:128px" width="16" height="16" viewBox="0 0 16 16"><defs><linearGradient id="gtri" x1="0" y1="0" x2="1" y2="0"><stop offset="0" stop-color="#e8e8e0"/><stop offset="1" stop-color="#a8a89c"/></linearGradient></defs><path d="M0.5 3.5 H5 L8 6.5 V14.5 H0.5Z" fill="#f8f6f0" stroke="#b8b6ac"/><path d="M3 11 H5" stroke="#a0a098"/><path d="M15 0.5 V15 L6.5 8Z" fill="url(#gtri)"/></svg>
<svg class="a" style="left:717px;top:128px" width="17" height="16" viewBox="0 0 17 16"><defs><linearGradient id="gtri2" x1="0" y1="0" x2="1" y2="0"><stop offset="0" stop-color="#a8a89c"/><stop offset="1" stop-color="#e8e8e0"/></linearGradient></defs><path d="M1 0.5 V15 L9.5 8Z" fill="url(#gtri2)"/><path d="M7.5 3.5 H12 L15.5 7 V14.5 H7.5Z" fill="#f8f6f0" stroke="#b8b6ac"/><path d="M10 12 H13" stroke="#a0a098"/></svg>
<svg class="a" style="left:784px;top:126px" width="24" height="22" viewBox="0 0 24 22"><defs><linearGradient id="gcp" x1="0" y1="0" x2="1" y2="1"><stop offset="0" stop-color="#fff"/><stop offset="1" stop-color="#d8d8d8"/></linearGradient></defs><path d="M5.5 3.5 H16 L19.5 7 V20.5 H5.5Z" fill="url(#gcp)" stroke="#909090"/><rect x="0.5" y="4.5" width="11" height="4.5" fill="#e80010" stroke="#a00008" stroke-width=".6"/><path d="M8 19 L11 13 L11.5 9 M11 13 C12 15 14.5 15.5 17 15.5" fill="none" stroke="#e83040" stroke-width="1"/><circle cx="18" cy="4" r="3.2" fill="#ffa030"/><circle cx="18" cy="4" r="1.6" fill="#fff080"/></svg>
<svg class="a" style="left:809px;top:135px" width="7" height="4" viewBox="0 0 7 4"><path d="M0 0 L7 0 L3.5 4Z" fill="#000"/></svg>
<svg class="a" style="left:823px;top:127px" width="22" height="20" viewBox="0 0 22 20"><rect x="0.5" y="0.5" width="20" height="19" fill="#dfe8f8" stroke="#7aa0d8"/><path d="M8 2 C6 1 4 3 6 5 C3 5 4 8 7 7 C9 9 13 9 14 7 C17 8 19 5 16 4 C17 1 13 1 12 2 C11 1 9 1 8 2Z" fill="#fff" stroke="#e02020" stroke-width=".8"/><path d="M2 13 L4.5 11 L7 13" fill="none" stroke="#2050c0"/><path d="M2 16 H9" stroke="#2050c0"/><rect x="10" y="10" width="9" height="6" rx="1" fill="#f8e040" stroke="#b09010" stroke-width=".7"/><path d="M12 16 L12 19 L15 16Z" fill="#f8e040"/></svg>
<svg class="a" style="left:847px;top:135px" width="7" height="4" viewBox="0 0 7 4"><path d="M0 0 L7 0 L3.5 4Z" fill="#000"/></svg>
<svg class="a" style="left:860px;top:127px" width="20" height="20" viewBox="0 0 20 20"><rect x="2" y="3" width="14" height="16" fill="#e4ecfa" stroke="#8aaad8"/><rect x="9" y="0.5" width="10" height="7" rx="1" fill="#f8e040" stroke="#b09010" stroke-width=".7"/><path d="M2 17 C4 11 9 11 12 13 L12 10 L17 15 L12 19 L12 16 C9 15 5 15 2 17Z" fill="#7050b0"/></svg>
<svg class="a" style="left:882px;top:135px" width="7" height="4" viewBox="0 0 7 4"><path d="M0 0 L7 0 L3.5 4Z" fill="#000"/></svg>
<svg class="a" style="left:896px;top:127px" width="17" height="21" viewBox="0 0 17 21"><defs><linearGradient id="glk" x1="0" y1="0" x2="1" y2="1"><stop offset="0" stop-color="#f8e070"/><stop offset="1" stop-color="#c89810"/></linearGradient></defs><path d="M4 9 V5.5 C4 0.5 13 0.5 13 5.5 V9" fill="none" stroke="#b08a10" stroke-width="2.6"/><path d="M4 9 V5.5 C4 0.5 13 0.5 13 5.5 V9" fill="none" stroke="#f0d060" stroke-width="1"/><rect x="0.5" y="8.5" width="16" height="11.5" fill="url(#glk)" stroke="#a88008"/></svg>
<svg class="a" style="left:916px;top:135px" width="7" height="4" viewBox="0 0 7 4"><path d="M0 0 L7 0 L3.5 4Z" fill="#000"/></svg>
<svg class="a" style="left:930px;top:126px" width="22" height="22" viewBox="0 0 22 22"><path d="M2.5 19.5 L5 14.5 L17 2.5 C18.5 1 20.5 3 19 4.5 L7 16.5Z" fill="#c02a1a" stroke="#701008" stroke-width=".9"/><path d="M9 11 L12 8" stroke="#e8c060" stroke-width="1.5"/><path d="M2.5 19.5 L5 14.5 L7 16.5Z" fill="#e8d8a0"/><path d="M3 20.5 H19" stroke="#707070" stroke-width="1"/></svg>
<svg class="a" style="left:955px;top:135px" width="7" height="4" viewBox="0 0 7 4"><path d="M0 0 L7 0 L3.5 4Z" fill="#000"/></svg>
<svg class="a" style="left:969px;top:127px" width="22" height="22" viewBox="0 0 22 22"><rect x="0.5" y="1.5" width="13" height="14" fill="#f4f8ff" stroke="#88a8d0"/><path d="M3 5 H11 M3 8 H11" stroke="#8898b0"/><rect x="6.5" y="6.5" width="14" height="14" fill="#fff" stroke="#88a8d0"/><path d="M9 10 H18 M9 12.5 H18 M9 15 H18 M9 17.5 H18" stroke="#404040"/></svg>
<svg class="a" style="left:994px;top:135px" width="7" height="4" viewBox="0 0 7 4"><path d="M0 0 L7 0 L3.5 4Z" fill="#000"/></svg>
<div class="a" style="left:256px;top:155px;width:32px;height:28px;border:1px solid #7a9cc0;border-radius:4px;background:#fff"></div>
<svg class="a" style="left:262px;top:157px" width="22" height="23" viewBox="0 0 22 23"><defs><linearGradient id="ghand" x1="0" y1="0" x2="0.3" y2="1"><stop offset="0.3" stop-color="#fff"/><stop offset="1" stop-color="#c8cedc"/></linearGradient></defs><path d="M8 21.5 C6 19 4.5 16.5 2.5 13.5 C1 11.5 2.5 10.3 4 11.3 L6.5 13.5 L4.3 6 C3.8 4.2 6 3.5 6.6 5.2 L8.8 11 L8.6 3 C8.6 1.2 11 1.2 11.2 3 L12 10.5 L13.2 4.5 C13.6 2.8 15.8 3.2 15.6 5 L15 11.5 L16.5 8.2 C17.2 6.8 19 7.3 18.6 9 L17.5 15 C17.2 17.5 16.5 19.5 16 21.5Z" fill="url(#ghand)" stroke="#6a7080" stroke-width="1.1" stroke-linejoin="round"/></svg>
<svg class="a" style="left:291px;top:158px" width="20" height="20" viewBox="0 0 20 20"><path d="M1.5 1.5 H8.5 M5 1.5 V18.5 M1.5 18.5 H8.5" stroke="#101010" stroke-width="1.3" fill="none"/><path d="M10.5 5 L18.5 11 L10.5 16.5Z" fill="#3a3a3a"/><path d="M11 7 L11 15" stroke="#9a9a9a" stroke-width="1.2"/></svg>
<div class="a" style="left:313px;top:161px;white-space:nowrap;font-size:10.6px">Seleziona</div>
<svg class="a" style="left:369px;top:157px" width="24" height="23" viewBox="0 0 24 23"><rect x="1.5" y="1.5" width="21" height="20" fill="none" stroke="#606060" stroke-dasharray="3,2"/><rect x="4" y="7" width="16" height="11" rx="1.5" fill="#1a1a1a"/><rect x="5" y="5.5" width="6" height="2" fill="#9ab"/><circle cx="11" cy="12.5" r="4" fill="#6080b0" stroke="#b0c0d8"/><circle cx="11" cy="12.5" r="1.8" fill="#203060"/></svg>
<svg class="a" style="left:411px;top:158px" width="22" height="22" viewBox="0 0 22 22"><circle cx="8" cy="8" r="6.5" fill="#dde8ff" stroke="#3050a0" stroke-width="1.5"/><path d="M8 4.5 V11.5 M4.5 8 H11.5" stroke="#1a2a90" stroke-width="2"/><path d="M13 13 L19.5 19.5" stroke="#c89020" stroke-width="3.2" stroke-linecap="round"/></svg>
<svg class="a" style="left:435px;top:167px" width="7" height="4" viewBox="0 0 7 4"><path d="M0 0 L7 0 L3.5 4Z" fill="#000"/></svg>
<svg class="a" style="left:453px;top:159px" width="16" height="20" viewBox="0 0 16 20"><defs><linearGradient id="gpg" x1="0" y1="0" x2="1" y2="1"><stop offset="0" stop-color="#fff"/><stop offset="1" stop-color="#c0d4f0"/></linearGradient></defs><rect x="0.5" y="0.5" width="15" height="19" fill="url(#gpg)" stroke="#6a98d0"/></svg>
<svg class="a" style="left:485px;top:159px" width="16" height="20" viewBox="0 0 16 20"><rect x="0.5" y="0.5" width="15" height="19" fill="url(#gpg)" stroke="#6a98d0"/><path d="M8 3 V8 M5.5 5.5 L8 2.5 L10.5 5.5 M8 12 V17 M5.5 14.5 L8 17.5 L10.5 14.5" fill="none" stroke="#1a4ab0" stroke-width="1.5"/></svg>
<div class="a" style="left:509px;top:155px;width:32px;height:28px;border:1px solid #7a9cc8;border-radius:3px;background:#fbfbf8"></div>
<svg class="a" style="left:517px;top:159px" width="16" height="20" viewBox="0 0 16 20"><rect x="0.5" y="0.5" width="15" height="19" fill="url(#gpg)" stroke="#6a98d0"/><path d="M2 10 H6.5 M4.5 7.5 L2 10 L4.5 12.5 M9.5 10 H14 M11.5 7.5 L14 10 L11.5 12.5" fill="none" stroke="#1a4ab0" stroke-width="1.5"/></svg>
<svg class="a" style="left:549px;top:160px" width="15" height="15" viewBox="0 0 15 15"><circle cx="7.5" cy="7.5" r="6.5" fill="#dfe6f8" stroke="#5060a8" stroke-width="1.3"/><path d="M4 7.5 H11" stroke="#1a2a90" stroke-width="2"/></svg>
<div class="a" style="left:573px;top:158px;width:50px;height:21px;background:#fff;border:1px solid #7f9db9"></div>
<div class="a" style="left:578px;top:162px;white-space:nowrap;font-size:11px">88%</div>
<svg class="a" style="left:624px;top:167px" width="7" height="4" viewBox="0 0 7 4"><path d="M0 0 L7 0 L3.5 4Z" fill="#000"/></svg>
<svg class="a" style="left:640px;top:160px" width="15" height="15" viewBox="0 0 15 15"><circle cx="7.5" cy="7.5" r="6.5" fill="#dfe6f8" stroke="#5060a8" stroke-width="1.3"/><path d="M4 7.5 H11 M7.5 4 V11" stroke="#1a2a90" stroke-width="2"/></svg>
<svg class="a" style="left:680px;top:157px" width="20" height="24" viewBox="0 0 20 24"><rect x="8.5" y="9.5" width="11" height="13" fill="#f4f4f4" stroke="#999"/><rect x="0.5" y="1.5" width="11" height="13" fill="#e8f0ff" stroke="#5080c0"/><path d="M14 1 V7 M12 5 L14 7.5 L16 5" fill="none" stroke="#000" stroke-width="1.2"/></svg>
<svg class="a" style="left:704px;top:167px" width="7" height="4" viewBox="0 0 7 4"><path d="M0 0 L7 0 L3.5 4Z" fill="#000"/></svg>
<div class="a" style="left:730px;top:160px;white-space:nowrap;font-family:'Liberation Serif',serif;font-weight:bold;font-size:16px;line-height:16px;color:#d81818;letter-spacing:-0.5px">Y<i>!</i></div>
<svg class="a" style="left:770px;top:159px" width="18" height="18" viewBox="0 0 18 18"><circle cx="9" cy="9" r="8.3" fill="#3a9a48" stroke="#1a6024"/><circle cx="7" cy="6" r="4" fill="#6ac070" opacity=".6"/><text x="9" y="13.8" font-family="Liberation Sans" font-weight="bold" font-size="13" fill="#fff" text-anchor="middle">?</text></svg>
<div class="a" style="left:791px;top:161px;white-space:nowrap;font-size:11px">?</div>
<svg class="a" style="left:801px;top:167px" width="7" height="4" viewBox="0 0 7 4"><path d="M0 0 L7 0 L3.5 4Z" fill="#000"/></svg>
<svg class="a" style="left:266px;top:193px" width="11" height="14" viewBox="0 0 11 14"><path d="M1 1 L1 11 L3.5 8.5 L6 13 L8 12 L5.8 7.7 L9.5 7.5Z" fill="#2a5c98" stroke="#1a3a68" stroke-width=".5"/></svg>
<svg class="a" style="left:295px;top:191px" width="18" height="20" viewBox="0 0 18 20"><path d="M1.5 1 V13 C1.5 17 7.5 17 7.5 13 V5 C7.5 1 12.5 1 12.5 5 V14" fill="none" stroke="#000" stroke-width="1.1"/><path d="M9 13.5 L16 13.5 L12.5 17.5Z" fill="#1a3aa8"/></svg>
<svg class="a" style="left:325px;top:191px" width="21" height="21" viewBox="0 0 21 21"><path d="M5 1 V16 H20 M1 5 H16 V20" fill="none" stroke="#707070" stroke-width="3"/><path d="M5 16 L17 4" stroke="#707070" stroke-width="1.5"/></svg>
<svg class="a" style="left:359px;top:191px" width="18" height="21" viewBox="0 0 18 21"><rect x="2.5" y="1.5" width="6" height="11" rx="3" transform="rotate(-30 5.5 7)" fill="none" stroke="#9a7000" stroke-width="3"/><rect x="2.5" y="1.5" width="6" height="11" rx="3" transform="rotate(-30 5.5 7)" fill="none" stroke="#f0c020" stroke-width="1.6"/><rect x="8.5" y="8.5" width="6" height="11" rx="3" transform="rotate(-15 11.5 14)" fill="none" stroke="#9a7000" stroke-width="3"/><rect x="8.5" y="8.5" width="6" height="11" rx="3" transform="rotate(-15 11.5 14)" fill="none" stroke="#f0c020" stroke-width="1.6"/></svg>
<svg class="a" style="left:389px;top:191px" width="22" height="21" viewBox="0 0 22 21"><path d="M14 1 L20 13 L11 13Z" fill="#e82020"/><circle cx="6.5" cy="7.5" r="5.8" fill="#2a5ab8"/><circle cx="5" cy="5.5" r="2.2" fill="#8ab0f0"/><path d="M8 11 L13 8.5 L18 10 L18 17 L13 20 L8 17.5Z" fill="#88c060" stroke="#4a7a30" stroke-width=".7"/><path d="M8 11 L13 12.5 L18 10 M13 12.5 V20" fill="none" stroke="#4a7a30" stroke-width=".6"/></svg>
<svg class="a" style="left:421px;top:192px" width="18" height="18" viewBox="0 0 18 18"><defs><linearGradient id="grc" x1="0" y1="0" x2="1" y2="1"><stop offset="0" stop-color="#a8c0e4"/><stop offset="1" stop-color="#6a88b8"/></linearGradient></defs><rect x="0.5" y="0.5" width="17" height="17" fill="url(#grc)" stroke="#5a78a8"/></svg>
<svg class="a" style="left:442px;top:200px" width="7" height="4" viewBox="0 0 7 4"><path d="M0 0 L7 0 L3.5 4Z" fill="#000"/></svg>
<svg class="a" style="left:459px;top:191px" width="18" height="20" viewBox="0 0 18 20"><rect x="0.5" y="0.5" width="17" height="19" fill="#303030"/><rect x="4" y="2" width="10" height="7" fill="#9ab8e0"/><rect x="4" y="11" width="10" height="7" fill="#9ab8e0"/><path d="M2 2 V18 M16 2 V18" stroke="#e0e0e0" stroke-dasharray="1.5,2"/></svg>
<svg class="a" style="left:480px;top:200px" width="7" height="4" viewBox="0 0 7 4"><path d="M0 0 L7 0 L3.5 4Z" fill="#000"/></svg>
<svg class="a" style="left:493px;top:191px" width="21" height="21" viewBox="0 0 21 21"><rect x="5" y="3.5" width="15" height="14" fill="#c4ccd8"/><path d="M5 3.5 H20 M5 17.5 H20" stroke="#3070d8" stroke-width="1"/><text x="12.5" y="15" font-family="Liberation Serif" font-weight="bold" font-size="13" fill="#303030" text-anchor="middle">T</text><path d="M4 2 C2.5 5 4 8 2.5 10.5 C4 13 2.5 16 4 19" fill="none" stroke="#2060d0" stroke-width="1.5"/><circle cx="4" cy="2" r="1.6" fill="#2060d0"/><circle cx="4" cy="19" r="1.6" fill="#2060d0"/></svg>
<svg class="a" style="left:517px;top:200px" width="7" height="4" viewBox="0 0 7 4"><path d="M0 0 L7 0 L3.5 4Z" fill="#000"/></svg>
<svg class="a" style="left:247px;top:217px" width="20" height="504" viewBox="0 0 20 504"><defs><linearGradient id="gb" x1="0" y1="0" x2="0" y2="1"><stop offset="0" stop-color="#d6d2c4"/><stop offset="1" stop-color="#9c998c"/></linearGradient></defs><path d="M19.5 7 L2.5 24 L2.5 68 L19.5 68Z" fill="#ece9d8"/><rect x="3" y="62" width="16" height="6" fill="url(#gb)"/><rect x="5.5" y="63.5" width="1.5" height="1.5" fill="#fff"/><rect x="8.5" y="63.5" width="1.5" height="1.5" fill="#fff"/><rect x="11.5" y="63.5" width="1.5" height="1.5" fill="#fff"/><path d="M19.5 7 L2.5 24 L2.5 67" fill="none" stroke="#716f64" stroke-width="1"/><path d="M3 67.5 H19" stroke="#8c897c" stroke-width="1"/><path d="M19.5 60 L2.5 77 L2.5 121 L19.5 121Z" fill="#ece9d8"/><rect x="3" y="115" width="16" height="6" fill="url(#gb)"/><rect x="5.5" y="116.5" width="1.5" height="1.5" fill="#fff"/><rect x="8.5" y="116.5" width="1.5" height="1.5" fill="#fff"/><rect x="11.5" y="116.5" width="1.5" height="1.5" fill="#fff"/><path d="M19.5 60 L2.5 77 L2.5 120" fill="none" stroke="#716f64" stroke-width="1"/><path d="M3 120.5 H19" stroke="#8c897c" stroke-width="1"/><path d="M19.5 114 L2.5 131 L2.5 175 L19.5 175Z" fill="#ece9d8"/><rect x="3" y="169" width="16" height="6" fill="url(#gb)"/><rect x="5.5" y="170.5" width="1.5" height="1.5" fill="#fff"/><rect x="8.5" y="170.5" width="1.5" height="1.5" fill="#fff"/><rect x="11.5" y="170.5" width="1.5" height="1.5" fill="#fff"/><path d="M19.5 114 L2.5 131 L2.5 174" fill="none" stroke="#716f64" stroke-width="1"/><path d="M3 174.5 H19" stroke="#8c897c" stroke-width="1"/><path d="M19.5 171.5 L2.5 188.5 L2.5 284 L19.5 284Z" fill="#ece9d8"/><rect x="3" y="278" width="16" height="6" fill="url(#gb)"/><rect x="5.5" y="279.5" width="1.5" height="1.5" fill="#fff"/><rect x="8.5" y="279.5" width="1.5" height="1.5" fill="#fff"/><rect x="11.5" y="279.5" width="1.5" height="1.5" fill="#fff"/><path d="M19.5 171.5 L2.5 188.5 L2.5 283" fill="none" stroke="#716f64" stroke-width="1"/><path d="M3 283.5 H19" stroke="#8c897c" stroke-width="1"/><path d="M19.5 277.5 L2.5 294.5 L2.5 361 L19.5 361Z" fill="#ece9d8"/><rect x="3" y="355" width="16" height="6" fill="url(#gb)"/><rect x="5.5" y="356.5" width="1.5" height="1.5" fill="#fff"/><rect x="8.5" y="356.5" width="1.5" height="1.5" fill="#fff"/><rect x="11.5" y="356.5" width="1.5" height="1.5" fill="#fff"/><path d="M19.5 277.5 L2.5 294.5 L2.5 360" fill="none" stroke="#716f64" stroke-width="1"/><path d="M3 360.5 H19" stroke="#8c897c" stroke-width="1"/><path d="M19.5 361 L2.5 361 L2.5 384 L19.5 384Z" fill="#ece9d8"/><rect x="3" y="378" width="16" height="6" fill="url(#gb)"/><rect x="5.5" y="379.5" width="1.5" height="1.5" fill="#fff"/><rect x="8.5" y="379.5" width="1.5" height="1.5" fill="#fff"/><rect x="11.5" y="379.5" width="1.5" height="1.5" fill="#fff"/><path d="M2.5 361 L2.5 383" fill="none" stroke="#716f64" stroke-width="1"/><path d="M3 383.5 H19" stroke="#8c897c" stroke-width="1"/><path d="M19.5 377.5 L2.5 394.5 L2.5 464 L19.5 464Z" fill="#ece9d8"/><rect x="3" y="458" width="16" height="6" fill="url(#gb)"/><rect x="5.5" y="459.5" width="1.5" height="1.5" fill="#fff"/><rect x="8.5" y="459.5" width="1.5" height="1.5" fill="#fff"/><rect x="11.5" y="459.5" width="1.5" height="1.5" fill="#fff"/><rect x="14.5" y="459.5" width="1.5" height="1.5" fill="#fff"/><path d="M19.5 377.5 L2.5 394.5 L2.5 463" fill="none" stroke="#716f64" stroke-width="1"/><path d="M3 463.5 H19" stroke="#8c897c" stroke-width="1"/></svg>
<div class="a" style="left:266px;top:217px;width:1px;height:277px;background:#716f64"></div>
<div class="a" style="left:266px;top:578px;width:1px;height:143px;background:#716f64"></div>
<div class="a" style="left:266px;top:494px;width:1px;height:84px;background:#ece9d8"></div>
<div class="a" style="left:158.0px;top:250.5px;width:200px;height:14px;text-align:center;font:10.5px/14px 'Liberation Sans';transform:rotate(-90deg);white-space:nowrap">Firme</div>
<div class="a" style="left:158.0px;top:303px;width:200px;height:14px;text-align:center;font:10.5px/14px 'Liberation Sans';transform:rotate(-90deg);white-space:nowrap">Livelli</div>
<div class="a" style="left:158.0px;top:359.5px;width:200px;height:14px;text-align:center;font:10.5px/14px 'Liberation Sans';transform:rotate(-90deg);white-space:nowrap">Pagine</div>
<div class="a" style="left:158.0px;top:441px;width:200px;height:14px;text-align:center;font:10.5px/14px 'Liberation Sans';transform:rotate(-90deg);white-space:nowrap">Albero modello</div>
<div class="a" style="left:158.0px;top:531.5px;width:200px;height:14px;text-align:center;font:bold 11px/14px 'Liberation Sans';transform:rotate(-90deg);white-space:nowrap">Segnalibri</div>
<div class="a" style="left:158.0px;top:576px;width:200px;height:14px;text-align:center;font:10.5px/14px 'Liberation Sans';transform:rotate(-90deg);white-space:nowrap">A</div>
<div class="a" style="left:158.0px;top:633.5px;width:200px;height:14px;text-align:center;font:10.5px/14px 'Liberation Sans';transform:rotate(-90deg);white-space:nowrap">Commenti</div>
<svg class="a" style="left:268px;top:458px" width="4" height="25" viewBox="0 0 4 25"><rect x="0" y="0" width="3" height="1" fill="#aaa89a"/><rect x="0" y="2" width="3" height="1" fill="#aaa89a"/><rect x="0" y="4" width="3" height="1" fill="#aaa89a"/><rect x="0" y="6" width="3" height="1" fill="#aaa89a"/><rect x="0" y="8" width="3" height="1" fill="#aaa89a"/><rect x="0" y="10" width="3" height="1" fill="#aaa89a"/><rect x="0" y="12" width="3" height="1" fill="#aaa89a"/><rect x="0" y="14" width="3" height="1" fill="#aaa89a"/><rect x="0" y="16" width="3" height="1" fill="#aaa89a"/><rect x="0" y="18" width="3" height="1" fill="#aaa89a"/><rect x="0" y="20" width="3" height="1" fill="#aaa89a"/><rect x="0" y="22" width="3" height="1" fill="#aaa89a"/><rect x="0" y="24" width="3" height="1" fill="#aaa89a"/></svg>
<div class="a" style="left:990px;top:219px;width:17px;height:8px;background:#ece9d8;border-bottom:1px solid #d0ccb8;border-top:1px solid #fff"></div>
<div class="a" style="left:990px;top:227px;width:17px;height:17px;background:#ece9d8;border-top:1px solid #fff;border-bottom:1px solid #d0ccb8"></div>
<svg class="a" style="left:996px;top:231px" width="6" height="9" viewBox="0 0 6 9"><path d="M0 0 L6 4.5 L0 9Z" fill="#000"/></svg>
<div class="a" style="left:991px;top:245px;width:15px;height:15px;border-radius:2px;background:linear-gradient(135deg,#c8d8fc,#b0c8f4);border:1px solid #c4d4f8"></div>
<svg class="a" style="left:994px;top:250px" width="9" height="6" viewBox="0 0 9 6"><path d="M0.5 5 L4.5 1 L8.5 5" fill="none" stroke="#4d6185" stroke-width="1.8"/></svg>
<div class="a" style="left:991px;top:263px;width:15px;height:143px;border-radius:2px;background:linear-gradient(90deg,#c4d4fc,#b8ccf8 50%,#aac0f4);border:1px solid #b0c4f0"></div>
<svg class="a" style="left:994px;top:330px" width="8" height="8" viewBox="0 0 8 8"><path d="M0 0.5 H7" stroke="#e8eeff"/><path d="M1 1.5 H8" stroke="#8ca4e0"/><path d="M0 2.5 H7" stroke="#e8eeff"/><path d="M1 3.5 H8" stroke="#8ca4e0"/><path d="M0 4.5 H7" stroke="#e8eeff"/><path d="M1 5.5 H8" stroke="#8ca4e0"/></svg>
<div class="a" style="left:991px;top:704px;width:15px;height:15px;border-radius:2px;background:linear-gradient(135deg,#c8d8fc,#b0c8f4);border:1px solid #c4d4f8"></div>
<svg class="a" style="left:994px;top:709px" width="9" height="6" viewBox="0 0 9 6"><path d="M0.5 1 L4.5 5 L8.5 1" fill="none" stroke="#4d6185" stroke-width="1.8"/></svg>
<div class="a" style="left:247px;top:721px;width:760px;height:1px;background:#716f64"></div>
<div class="a" style="left:247px;top:722px;width:760px;height:24px;background:#ece9d8"></div>
<svg class="a" style="left:258px;top:726px" width="17" height="17" viewBox="0 0 17 17"><rect x="0.5" y="0.5" width="16" height="13" fill="#b0b0b0" stroke="#888"/><rect x="2" y="2" width="13" height="10" fill="#101010"/><rect x="5.5" y="2.5" width="6" height="9" fill="#b8cce8"/><path d="M6.5 4.5 H10.5 M6.5 6.5 H10.5 M6.5 8.5 H10.5" stroke="#6a7a90"/><rect x="14" y="12" width="2" height="1.5" fill="#20d020"/><path d="M4 15.5 H13" stroke="#888" stroke-width="1.5"/></svg>
<svg class="a" style="left:291px;top:726px" width="15" height="16" viewBox="0 0 15 16"><rect x="0.5" y="0.5" width="14" height="5" fill="#fff" stroke="#8a9ab0"/><rect x="0.5" y="5.5" width="14" height="10" fill="url(#gst)" stroke="#5a7ab0"/><rect x="4" y="9" width="7" height="2.5" fill="#3050a0"/><defs><linearGradient id="gst" x1="0" y1="0" x2="0" y2="1"><stop offset="0" stop-color="#fff"/><stop offset="1" stop-color="#c8c8c8"/></linearGradient></defs></svg>
<div class="a" style="left:484px;top:723px;width:1px;height:21px;background:#aca899"></div>
<div class="a" style="left:485px;top:723px;width:1px;height:21px;background:#fff"></div>
<svg class="a" style="left:498px;top:726px" width="16" height="16" viewBox="0 0 16 16"><rect x="1" y="1" width="3" height="14" fill="#c8c6bc" stroke="#aaa8a0" stroke-width=".6"/><path d="M14.5 1 L5 8 L14.5 15Z" fill="#d0cec4" stroke="#aaa8a0" stroke-width=".8"/></svg>
<svg class="a" style="left:533px;top:727px" width="10" height="14" viewBox="0 0 10 14"><path d="M9 1 L1 7 L9 13Z" fill="#d0cec4" stroke="#aaa8a0" stroke-width=".8"/></svg>
<div class="a" style="left:554px;top:723px;width:72px;height:21px;background:#fff;border:1px solid #7f9db9"></div>
<div class="a" style="left:577px;top:727px;white-space:nowrap;font-size:11px">1 di 1</div>
<svg class="a" style="left:637px;top:727px" width="10" height="14" viewBox="0 0 10 14"><path d="M1 1 L9 7 L1 13Z" fill="#d0cec4" stroke="#aaa8a0" stroke-width=".8"/></svg>
<svg class="a" style="left:666px;top:726px" width="16" height="16" viewBox="0 0 16 16"><path d="M1.5 1 L11 8 L1.5 15Z" fill="#d0cec4" stroke="#aaa8a0" stroke-width=".8"/><rect x="12" y="1" width="3" height="14" fill="#c8c6bc" stroke="#aaa8a0" stroke-width=".6"/></svg>
<div class="a" style="left:695px;top:723px;width:1px;height:21px;background:#aca899"></div>
<div class="a" style="left:696px;top:723px;width:1px;height:21px;background:#fff"></div>
<svg class="a" style="left:707px;top:725px" width="17" height="17" viewBox="0 0 17 17"><circle cx="8.5" cy="8.5" r="8" fill="#3a8a2a"/><circle cx="8.5" cy="8.5" r="6.5" fill="#5aa848"/><path d="M4 8.5 L8 4.5 V7 H13 V10 H8 V12.5Z" fill="#fff"/></svg>
<svg class="a" style="left:739px;top:725px" width="17" height="17" viewBox="0 0 17 17"><circle cx="8.5" cy="8.5" r="8" fill="#b8b6ac"/><circle cx="8.5" cy="8.5" r="6.5" fill="#cac8c0"/><path d="M13 8.5 L9 4.5 V7 H4 V10 H9 V12.5Z" fill="#f4f4f0"/></svg>
<div class="a" style="left:768px;top:723px;width:1px;height:21px;background:#aca899"></div>
<div class="a" style="left:769px;top:723px;width:1px;height:21px;background:#fff"></div>
<div class="a" style="left:877px;top:723px;width:31px;height:21px;border:1px solid #7a9cc8;border-radius:3px;background:#fbfbf8"></div>
<div class="a" style="left:885px;top:726px;width:14px;height:16px;background:linear-gradient(135deg,#fff,#b8ccf0);border:1px solid #5a7ab8"></div>
<svg class="a" style="left:915px;top:726px" width="18" height="16" viewBox="0 0 18 16"><rect x="0.5" y="0.5" width="15" height="6" fill="#f0eee6" stroke="#b8b6ac"/><rect x="0.5" y="8.5" width="15" height="7" fill="#d8d6cc" stroke="#b8b6ac"/></svg>
<svg class="a" style="left:947px;top:726px" width="18" height="16" viewBox="0 0 18 16"><rect x="0.5" y="0.5" width="6" height="6" fill="#f0eee6" stroke="#b8b6ac"/><rect x="9.5" y="0.5" width="6" height="6" fill="#f0eee6" stroke="#b8b6ac"/><rect x="0.5" y="8.5" width="6" height="7" fill="#d8d6cc" stroke="#b8b6ac"/><rect x="9.5" y="8.5" width="6" height="7" fill="#d8d6cc" stroke="#b8b6ac"/></svg>
<svg class="a" style="left:979px;top:727px" width="18" height="14" viewBox="0 0 18 14"><rect x="0.5" y="0.5" width="6" height="12" fill="#e8e6dc" stroke="#c8c6bc"/><rect x="9.5" y="0.5" width="6" height="12" fill="#e8e6dc" stroke="#c8c6bc"/></svg><div class="a" style="left:283px;top:223px;width:698px;height:498px;overflow:hidden"><svg class="a" style="left:97px;top:37px" width="44" height="52" viewBox="0 0 44 52"><g fill="#d93a0e"><path d="M5.5 12.5 L26 10 L23.5 20 L18 20.5 L17.5 24 L5 17Z"/><path d="M29 7 L35 7 L42 24.5 L31 25 L31 20.5 L26 20Z"/><path d="M7.5 22 L17.5 27 L16 30.5 L19.5 33.5 L10 43.5 L5 40.5Z"/><path d="M14.5 43 L21 35.5 L24 37.5 L28 34.5 L36 45.5 L31.5 49.5Z"/></g></svg>
<div class="a" style="left:147.00px;top:45.35px;font:normal 19.2px/19.2px 'Liberation Sans';color:#000;white-space:nowrap;letter-spacing:0.1px;color:#1a1a1a">Agenzia</div>
<div class="a" style="left:221.00px;top:51.02px;font:normal 12.5px/12.5px 'Liberation Sans';color:#000;white-space:nowrap;color:#1a1a1a">del</div>
<div class="a" style="left:147.00px;top:65.87px;font:normal 20px/20px 'Liberation Sans';color:#000;white-space:nowrap;letter-spacing:1px;color:#1a1a1a">Territorio</div>
<svg class="a" style="left:250px;top:51px" width="28" height="34" viewBox="0 0 28 34"><g fill="none" stroke="#a4a4a4"><path d="M11 3 C5 4 2 9 2 15 C2 21 5 25 9 28" stroke-width="2.6" stroke-dasharray="2.2,1"/><path d="M17 3 C23 4 26 9 26 15 C26 21 23 25 19 28" stroke-width="2.6" stroke-dasharray="2.2,1"/><circle cx="14" cy="16" r="8" stroke-width="1.3"/><path d="M14 9.5 L15.7 13.8 L20.3 13.9 L16.7 16.8 L18 21.3 L14 18.7 L10 21.3 L11.3 16.8 L7.7 13.9 L12.3 13.8Z" stroke-width="1.1"/><path d="M5 26 L14 30 L23 26 M8 30 L11 32 M20 30 L17 32" stroke-width="1.6"/></g></svg>
<div class="a" style="left:93px;top:98px;width:513px;height:600px;border:1px solid #000"></div>

<div class="a" style="left:113.50px;top:101.62px;font:bold 21px/21px 'Liberation Sans';color:#000080;white-space:nowrap;">DELEGA PER L’ACCESSO ALLE PLANIMETRIE</div>
<div class="a" style="left:100.00px;top:148.30px;font:normal 13px/13px 'Liberation Sans';color:#000;white-space:nowrap;">Il/La sottoscritto/a *</div>
<div class="a" style="left:216.50px;top:147.03px;font:bold 11.7px/11.7px 'Liberation Mono';color:#1a1a1a;white-space:nowrap;">BIANCHI MARIA</div>
<div class="a" style="left:216px;top:158px;width:197px;height:1px;background:repeating-linear-gradient(90deg,#000 0 1.4px,transparent 1.4px 3.6px);opacity:.8"></div>
<div class="a" style="left:417.50px;top:148.30px;font:normal 13px/13px 'Liberation Sans';color:#000;white-space:nowrap;">nato/a</div>
<div class="a" style="left:459.60px;top:147.03px;font:bold 11.7px/11.7px 'Liberation Mono';color:#1a1a1a;white-space:nowrap;">LA SPEZIA</div>
<div class="a" style="left:459px;top:158px;width:138px;height:1px;background:repeating-linear-gradient(90deg,#000 0 1.4px,transparent 1.4px 3.6px);opacity:.8"></div>
<div class="a" style="left:100.00px;top:169.30px;font:normal 13px/13px 'Liberation Sans';color:#000;white-space:nowrap;">il</div>
<div class="a" style="left:107px;top:180px;width:131px;height:1px;background:repeating-linear-gradient(90deg,#000 0 1.4px,transparent 1.4px 3.6px);opacity:.8"></div>
<div class="a" style="left:136.50px;top:170.33px;font:bold 11.7px/11.7px 'Liberation Mono';color:#1a1a1a;white-space:nowrap;">04/01/1975</div>
<div class="a" style="left:242.00px;top:169.30px;font:normal 13px/13px 'Liberation Sans';color:#000;white-space:nowrap;">, Cod. Fisc.</div>
<div class="a" style="left:313.00px;top:170.49px;font:bold 11.5px/11.5px 'Liberation Mono';color:#1a1a1a;white-space:nowrap;">BNC MRA 75A44 E463W</div>
<div class="a" style="left:313px;top:180px;width:284px;height:1px;background:repeating-linear-gradient(90deg,#000 0 1.4px,transparent 1.4px 3.6px);opacity:.8"></div>
<div class="a" style="left:100.00px;top:192.60px;font:normal 13px/13px 'Liberation Sans';color:#000;white-space:nowrap;">residente in</div>
<div class="a" style="left:171.00px;top:192.03px;font:bold 11.7px/11.7px 'Liberation Mono';color:#1a1a1a;white-space:nowrap;">AOSTA</div>
<div class="a" style="left:171px;top:203px;width:167px;height:1px;background:repeating-linear-gradient(90deg,#000 0 1.4px,transparent 1.4px 3.6px);opacity:.8"></div>
<div class="a" style="left:340.50px;top:192.60px;font:normal 13px/13px 'Liberation Sans';color:#000;white-space:nowrap;">via</div>
<div class="a" style="left:364.00px;top:192.03px;font:bold 11.7px/11.7px 'Liberation Mono';color:#1a1a1a;white-space:nowrap;">VIA ALTA</div>
<div class="a" style="left:364px;top:203px;width:180px;height:1px;background:repeating-linear-gradient(90deg,#000 0 1.4px,transparent 1.4px 3.6px);opacity:.8"></div>
<div class="a" style="left:549.00px;top:192.60px;font:normal 13px/13px 'Liberation Sans';color:#000;white-space:nowrap;">n.</div>
<div class="a" style="left:564.00px;top:192.03px;font:bold 11.7px/11.7px 'Liberation Mono';color:#1a1a1a;white-space:nowrap;">111</div>
<div class="a" style="left:564px;top:203px;width:33px;height:1px;background:repeating-linear-gradient(90deg,#000 0 1.4px,transparent 1.4px 3.6px);opacity:.8"></div>
<div class="a" style="left:100.00px;top:214.50px;font:normal 13px/13px 'Liberation Sans';color:#000;white-space:nowrap;">in qualità di (</div>
<div class="a" style="left:173.00px;top:217.54px;font:normal 9.4px/9.4px 'Liberation Sans';color:#000;white-space:nowrap;">titolare di diritto/rappresentante legale/etc</div>
<div class="a" style="left:345.50px;top:214.50px;font:normal 13px/13px 'Liberation Sans';color:#000;white-space:nowrap;">)</div>
<div class="a" style="left:353.00px;top:214.03px;font:bold 11.7px/11.7px 'Liberation Mono';color:#1a1a1a;white-space:nowrap;">TITOLARE DI DIRITTO</div>
<div class="a" style="left:350px;top:225px;width:247px;height:1px;background:repeating-linear-gradient(90deg,#000 0 1.4px,transparent 1.4px 3.6px);opacity:.8"></div>
<div class="a" style="left:323.50px;top:236.70px;font:normal 13px/13px 'Liberation Sans';color:#000;white-space:nowrap;">DELEGA</div>
<div class="a" style="left:100.00px;top:258.60px;font:normal 13px/13px 'Liberation Sans';color:#000;white-space:nowrap;">Il/La Sig./a</div>
<div class="a" style="left:165.30px;top:258.83px;font:bold 11.7px/11.7px 'Liberation Mono';color:#1a1a1a;white-space:nowrap;">BELLOCCI PATRIZIA</div>
<div class="a" style="left:162px;top:269px;width:279px;height:1px;background:repeating-linear-gradient(90deg,#000 0 1.4px,transparent 1.4px 3.6px);opacity:.8"></div>
<div class="a" style="left:443.40px;top:258.60px;font:normal 13px/13px 'Liberation Sans';color:#000;white-space:nowrap;">nato/a.</div>
<div class="a" style="left:482.80px;top:259.22px;font:bold 11.2px/11.2px 'Liberation Mono';color:#1a1a1a;white-space:nowrap;">SIENA</div>
<div class="a" style="left:481px;top:269px;width:116px;height:1px;background:repeating-linear-gradient(90deg,#000 0 1.4px,transparent 1.4px 3.6px);opacity:.8"></div>
<div class="a" style="left:100.00px;top:281.00px;font:normal 13px/13px 'Liberation Sans';color:#000;white-space:nowrap;">il.</div>
<div class="a" style="left:110px;top:292px;width:84px;height:1px;background:repeating-linear-gradient(90deg,#000 0 1.4px,transparent 1.4px 3.6px);opacity:.8"></div>
<div class="a" style="left:115.30px;top:279.83px;font:bold 11.7px/11.7px 'Liberation Mono';color:#1a1a1a;white-space:nowrap;">15/01/1955</div>
<div class="a" style="left:195.80px;top:281.00px;font:normal 13px/13px 'Liberation Sans';color:#000;white-space:nowrap;">residente in</div>
<div class="a" style="left:268.00px;top:280.22px;font:bold 11.2px/11.2px 'Liberation Mono';color:#1a1a1a;white-space:nowrap;">SARZANA</div>
<div class="a" style="left:268px;top:292px;width:329px;height:1px;background:repeating-linear-gradient(90deg,#000 0 1.4px,transparent 1.4px 3.6px);opacity:.8"></div>
<div class="a" style="left:100.00px;top:303.50px;font:normal 13px/13px 'Liberation Sans';color:#000;white-space:nowrap;">via</div>
<div class="a" style="left:118.40px;top:303.42px;font:bold 11.2px/11.2px 'Liberation Mono';color:#1a1a1a;white-space:nowrap;">VIA ROSSI</div>
<div class="a" style="left:115px;top:314px;width:374px;height:1px;background:repeating-linear-gradient(90deg,#000 0 1.4px,transparent 1.4px 3.6px);opacity:.8"></div>
<div class="a" style="left:493.70px;top:303.50px;font:normal 13px/13px 'Liberation Sans';color:#000;white-space:nowrap;">n.</div>
<div class="a" style="left:512.50px;top:303.03px;font:bold 11.7px/11.7px 'Liberation Mono';color:#1a1a1a;white-space:nowrap;">10</div>
<div class="a" style="left:509px;top:314px;width:88px;height:1px;background:repeating-linear-gradient(90deg,#000 0 1.4px,transparent 1.4px 3.6px);opacity:.8"></div>
<div class="a" style="left:100.00px;top:325.80px;font:normal 13px/13px 'Liberation Sans';color:#000;white-space:nowrap;">affinché:</div>
<div class="a" style="left:100px;top:347px;width:15px;height:15px;border:1px solid #000;border-radius:50%"></div>
<div class="a" style="left:136.00px;top:347.40px;font:bold 13px/13px 'Liberation Sans';color:#000;white-space:nowrap;">effettui visura</div>
<div class="a" style="left:100px;top:368.5px;width:15px;height:15px;border:1px solid #000;border-radius:50%"></div>
<div class="a" style="left:136.00px;top:370.20px;font:bold 13px/13px 'Liberation Sans';color:#000;white-space:nowrap;">richieda e riceva copia</div>
<div class="a" style="left:100.00px;top:391.90px;font:normal 12.88px/12.88px 'Liberation Sans';color:#000;white-space:nowrap;">della planimetria relativa alla/alle unità immobiliari di seguito descritta/e.</div>
<div class="a" style="left:100.00px;top:414.40px;font:normal 13px/13px 'Liberation Sans';color:#000;white-space:nowrap;">COMUNE</div>
<div class="a" style="left:163.60px;top:413.42px;font:bold 11.2px/11.2px 'Liberation Mono';color:#1a1a1a;white-space:nowrap;">SARZANA</div>
<div class="a" style="left:162px;top:425px;width:298px;height:1px;background:repeating-linear-gradient(90deg,#000 0 1.4px,transparent 1.4px 3.6px);opacity:.8"></div>
<div class="a" style="left:463.20px;top:414.40px;font:normal 13px/13px 'Liberation Sans';color:#000;white-space:nowrap;">FOGLIO.</div>
<div class="a" style="left:515.80px;top:413.42px;font:bold 11.2px/11.2px 'Liberation Mono';color:#1a1a1a;white-space:nowrap;">24</div>
<div class="a" style="left:514px;top:425px;width:80px;height:1px;background:repeating-linear-gradient(90deg,#000 0 1.4px,transparent 1.4px 3.6px);opacity:.8"></div>
<div class="a" style="left:100.00px;top:459.50px;font:normal 13px/13px 'Liberation Sans';color:#000;white-space:nowrap;">COMUNE</div>
<div class="a" style="left:163.60px;top:459.92px;font:bold 11.2px/11.2px 'Liberation Mono';color:#1a1a1a;white-space:nowrap;">SARZANA</div>
<div class="a" style="left:162px;top:470px;width:298px;height:1px;background:repeating-linear-gradient(90deg,#000 0 1.4px,transparent 1.4px 3.6px);opacity:.8"></div>
<div class="a" style="left:463.20px;top:459.50px;font:normal 13px/13px 'Liberation Sans';color:#000;white-space:nowrap;">FOGLIO.</div>
<div class="a" style="left:515.80px;top:459.92px;font:bold 11.2px/11.2px 'Liberation Mono';color:#1a1a1a;white-space:nowrap;">24</div>
<div class="a" style="left:514px;top:470px;width:80px;height:1px;background:repeating-linear-gradient(90deg,#000 0 1.4px,transparent 1.4px 3.6px);opacity:.8"></div>
<div class="a" style="left:100.00px;top:436.70px;font:normal 13px/13px 'Liberation Sans';color:#000;white-space:nowrap;">PARTICELLA.</div>
<div class="a" style="left:183.00px;top:436.32px;font:bold 11.2px/11.2px 'Liberation Mono';color:#1a1a1a;white-space:nowrap;">770</div>
<div class="a" style="left:182px;top:447px;width:276px;height:1px;background:repeating-linear-gradient(90deg,#000 0 1.4px,transparent 1.4px 3.6px);opacity:.8"></div>
<div class="a" style="left:461.20px;top:436.70px;font:normal 13px/13px 'Liberation Sans';color:#000;white-space:nowrap;">SUB.</div>
<div class="a" style="left:493.00px;top:436.32px;font:bold 11.2px/11.2px 'Liberation Mono';color:#1a1a1a;white-space:nowrap;">6</div>
<div class="a" style="left:490px;top:447px;width:104px;height:1px;background:repeating-linear-gradient(90deg,#000 0 1.4px,transparent 1.4px 3.6px);opacity:.8"></div>
<div class="a" style="left:100.00px;top:481.00px;font:normal 13px/13px 'Liberation Sans';color:#000;white-space:nowrap;">PARTICELLA.</div>
<div class="a" style="left:183.00px;top:479.42px;font:bold 11.2px/11.2px 'Liberation Mono';color:#1a1a1a;white-space:nowrap;">770</div>
<div class="a" style="left:182px;top:492px;width:276px;height:1px;background:repeating-linear-gradient(90deg,#000 0 1.4px,transparent 1.4px 3.6px);opacity:.8"></div>
<div class="a" style="left:461.20px;top:481.00px;font:normal 13px/13px 'Liberation Sans';color:#000;white-space:nowrap;">SUB.</div>
<div class="a" style="left:493.00px;top:479.42px;font:bold 11.2px/11.2px 'Liberation Mono';color:#1a1a1a;white-space:nowrap;">5</div>
<div class="a" style="left:490px;top:492px;width:104px;height:1px;background:repeating-linear-gradient(90deg,#000 0 1.4px,transparent 1.4px 3.6px);opacity:.8"></div></div>
</body></html>
